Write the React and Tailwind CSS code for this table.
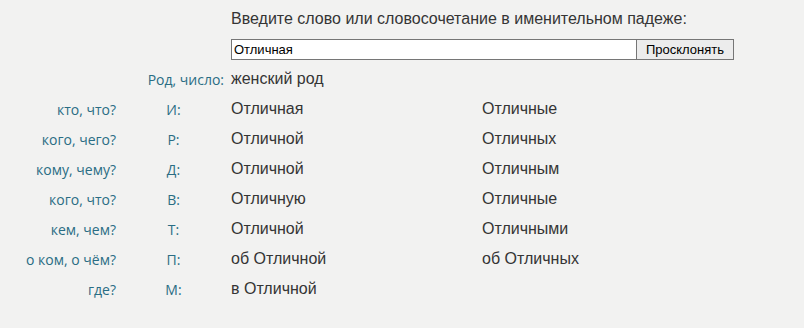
const cases = [
  { q: "кто, что?", c: "И:", one: "Отличная", many: "Отличные" },
  { q: "кого, чего?", c: "Р:", one: "Отличной", many: "Отличных" },
  { q: "кому, чему?", c: "Д:", one: "Отличной", many: "Отличным" },
  { q: "кого, что?", c: "В:", one: "Отличную", many: "Отличные" },
  { q: "кем, чем?", c: "Т:", one: "Отличной", many: "Отличными" },
  { q: "о ком, о чём?", c: "П:", one: "об Отличной", many: "об Отличных" },
  { q: "где?", c: "М:", one: "в Отличной", many: "" },
];

const label = "font-['Open_Sans',sans-serif] text-[14px] text-[#2a6d84]";
const value = "font-['Liberation_Sans',Arial,sans-serif] text-[16px] text-[#353535]";

export default function App() {
  return (
    <div className="w-[804px] h-[328px] bg-[#f2f2f1] overflow-hidden">
      <div className="pl-[231px] pt-[8px]">
        <div className={`${value} leading-[22px]`}>Введите слово или словосочетание в именительном падеже:</div>
        <form className="flex mt-[9px]" onSubmit={(e) => e.preventDefault()}>
          <input
            type="text"
            defaultValue="Отличная"
            className="w-[406px] h-[21px] bg-white border border-[#767676] px-[2px] text-[13px] text-black font-['Liberation_Sans',Arial,sans-serif] outline-none"
          />
          <button
            type="submit"
            className="w-[97px] h-[21px] bg-[#ececec] border border-[#767676] border-l-0 text-[13px] text-black font-['Liberation_Sans',Arial,sans-serif]"
          >
            Просклонять
          </button>
        </form>
      </div>

      {/* склонение по падежам: вопрос, падеж, ед. число, мн. число */}
      <div className="grid grid-cols-[116px_115px_251px_1fr] mt-[4px]">
        <div className={`col-span-2 ${label} pr-[7px] h-[30px] flex items-center justify-end`}>Род, число:</div>
        <div className={`col-span-2 ${value} h-[30px] flex items-center`}>женский род</div>

        {cases.map((row) => (
          <div key={row.c} className="contents">
            <div className={`${label} h-[30px] flex items-center justify-end`}>{row.q}</div>
            <div className={`${label} h-[30px] flex items-center justify-center`}>{row.c}</div>
            <div className={`${value} h-[30px] flex items-center`}>{row.one}</div>
            <div className={`${value} h-[30px] flex items-center`}>{row.many}</div>
          </div>
        ))}
      </div>
    </div>
  );
}
